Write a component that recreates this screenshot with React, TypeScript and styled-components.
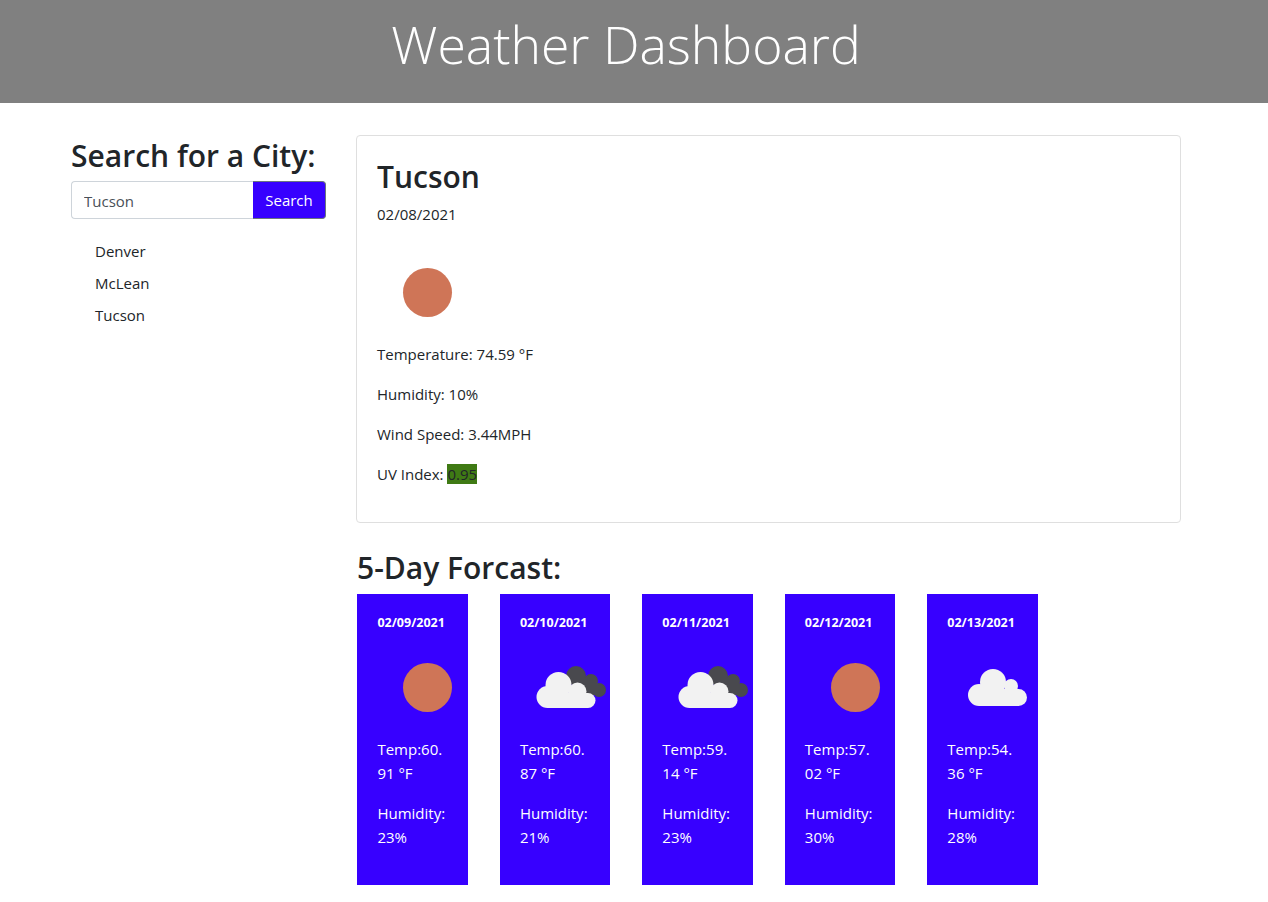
import React from "react";
import styled, { createGlobalStyle } from "styled-components";

const GlobalStyle = createGlobalStyle`
  html, body {
    margin: 0;
    background: #fff;
    color: #212529;
    font-family: "Open Sans", "Noto Sans", Arial, sans-serif;
    font-size: 15px;
    line-height: 24px;
  }
  * { box-sizing: border-box; }
`;

const Header = styled.header`
  height: 103px;
  background: #808080;
  display: flex;
  justify-content: center;
  padding-right: 16px;
`;

const Title = styled.h1`
  margin: 0;
  color: #fff;
  font-size: 51.7px;
  font-weight: 300;
  line-height: 88px;
`;

const Content = styled.div`
  display: flex;
  gap: 30px;
  padding: 32px 0 0 71px;
  align-items: flex-start;
`;

const Sidebar = styled.aside`
  width: 255px;
  flex: none;
`;

const Heading = styled.h2`
  margin: 0 0 8px;
  font-size: 30px;
  font-weight: 600;
  line-height: 38.4px;
  white-space: nowrap;
`;

const SidebarHeading = styled(Heading)`
  margin: 2px 0 6px;
`;

const CityHeading = styled(Heading)`
  margin: 2px 0 6px;
`;

const SearchGroup = styled.form`
  display: flex;
  height: 38px;
`;

const SearchInput = styled.input`
  flex: 1;
  min-width: 0;
  padding: 1px 12px 0;
  border: 1px solid #ced4da;
  border-right: 0;
  border-radius: 4px 0 0 4px;
  color: #495057;
  font: inherit;
  outline: none;
`;

const SearchButton = styled.button`
  width: 73px;
  padding: 0;
  background: #3700ff;
  border: 1px solid #6c757d;
  border-left: 0;
  border-radius: 0 4px 4px 0;
  color: #fff;
  font: inherit;
`;

const CityList = styled.ul`
  list-style: none;
  margin: 16px 0 0;
  padding: 0 0 0 24px;
`;

const CityItem = styled.li`
  padding: 4px 0;
`;

const Main = styled.main`
  width: 825px;
  flex: none;
`;

const TodayCard = styled.section`
  height: 388px;
  padding: 20px;
  border: 1px solid #dfdfdf;
  border-radius: 4px;
`;

const DateLine = styled.div`
  margin-bottom: 16px;
`;

const IconBox = styled.div`
  width: 100px;
  height: 100px;
`;

const Stat = styled.p`
  margin: 0 0 16px;
`;

const UvValue = styled.span`
  background: #3f7a14;
`;

const ForecastHeading = styled(Heading)`
  margin: 26px 0 7px 1px;
`;

const ForecastRow = styled.div`
  display: flex;
  gap: 31.9px;
  margin-left: 1.4px;
`;

const ForecastCard = styled.article`
  width: 110.6px;
  height: 291px;
  padding: 20px;
  background: #3700ff;
  color: #fff;
`;

const ForecastDate = styled.div`
  margin-bottom: 5px;
  font-size: 12.5px;
  font-weight: 700;
  line-height: 18px;
  white-space: nowrap;
`;

const IconSvg = styled.svg`
  display: block;
  overflow: visible;
`;

type IconKind = "sun" | "partly" | "cloud";

const Icon = ({ kind }: { kind: IconKind }) => (
  <IconSvg width="100" height="100" viewBox="0 0 100 100">
    {kind === "sun" && <circle cx="50.5" cy="50.5" r="24.5" fill="#cf7557" />}
    {kind === "partly" && (
      <g>
        <g fill="#49494e">
          <circle cx="56" cy="39" r="10" />
          <circle cx="71" cy="44" r="7" />
          <circle cx="79" cy="53" r="7" />
          <rect x="52" y="42" width="24" height="16" />
        </g>
        <g fill="#f2f2f2">
          <circle cx="27.5" cy="60" r="11" />
          <circle cx="38.5" cy="48" r="13" />
          <circle cx="57.5" cy="54.5" r="9" />
          <circle cx="68" cy="63.5" r="7.5" />
          <rect x="27.5" y="56" width="40.5" height="15" />
        </g>
      </g>
    )}
    {kind === "cloud" && (
      <g fill="#f2f2f2">
        <circle cx="32" cy="58" r="11" />
        <circle cx="46" cy="45" r="13" />
        <circle cx="64" cy="49" r="7" />
        <circle cx="71.5" cy="60.5" r="8.5" />
        <rect x="32" y="52" width="40" height="17" />
      </g>
    )}
  </IconSvg>
);

const forecast: { date: string; temp: [string, string]; humidity: string; icon: IconKind }[] = [
  { date: "02/09/2021", temp: ["Temp:60.", "91 °F"], humidity: "23%", icon: "sun" },
  { date: "02/10/2021", temp: ["Temp:60.", "87 °F"], humidity: "21%", icon: "partly" },
  { date: "02/11/2021", temp: ["Temp:59.", "14 °F"], humidity: "23%", icon: "partly" },
  { date: "02/12/2021", temp: ["Temp:57.", "02 °F"], humidity: "30%", icon: "sun" },
  { date: "02/13/2021", temp: ["Temp:54.", "36 °F"], humidity: "28%", icon: "cloud" },
];

const cities = ["Denver", "McLean", "Tucson"];

const App = () => (
  <>
    <GlobalStyle />
    <Header>
      <Title>Weather Dashboard</Title>
    </Header>
    <Content>
      <Sidebar>
        <SidebarHeading>Search for a City:</SidebarHeading>
        <SearchGroup onSubmit={(e) => e.preventDefault()}>
          <SearchInput defaultValue="Tucson" />
          <SearchButton>Search</SearchButton>
        </SearchGroup>
        <CityList>
          {cities.map((city) => (
            <CityItem key={city}>{city}</CityItem>
          ))}
        </CityList>
      </Sidebar>
      <Main>
        <TodayCard>
          <CityHeading>Tucson</CityHeading>
          <DateLine>02/08/2021</DateLine>
          <IconBox>
            <Icon kind="sun" />
          </IconBox>
          <Stat>Temperature: 74.59 °F</Stat>
          <Stat>Humidity: 10%</Stat>
          <Stat>Wind Speed: 3.44MPH</Stat>
          <Stat>
            UV Index: <UvValue>0.95</UvValue>
          </Stat>
        </TodayCard>
        <ForecastHeading>5-Day Forcast:</ForecastHeading>
        <ForecastRow>
          {forecast.map((day) => (
            <ForecastCard key={day.date}>
              <ForecastDate>{day.date}</ForecastDate>
              <IconBox>
                <Icon kind={day.icon} />
              </IconBox>
              <Stat>
                {day.temp[0]}
                <br />
                {day.temp[1]}
              </Stat>
              <Stat>
                Humidity:
                <br />
                {day.humidity}
              </Stat>
            </ForecastCard>
          ))}
        </ForecastRow>
      </Main>
    </Content>
  </>
);

export default App;
